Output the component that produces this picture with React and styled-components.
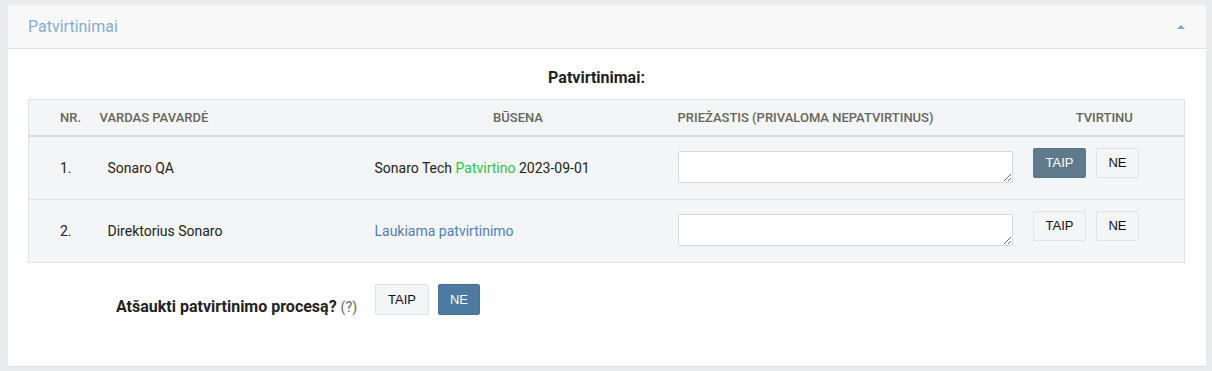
import React from 'react';
import styled, { createGlobalStyle } from 'styled-components';

const Global = createGlobalStyle`
  body {
    margin: 0;
    background: #e9ecef;
    font-family: Roboto, "Liberation Sans", sans-serif;
  }
  #root {
    padding: 5px 6px 7px 8px;
  }
`;

const Card = styled.section`
  background: #fff;
  border-radius: 2px;
  box-shadow: 0 1px 1px rgba(0, 0, 0, 0.06);
`;

const CardHeader = styled.header`
  height: 43px;
  display: flex;
  align-items: center;
  justify-content: space-between;
  padding: 0 20px;
  background: #f8f8f8;
  border-bottom: 1px solid #dde2e6;
  border-radius: 2px 2px 0 0;
`;

const Title = styled.h2`
  margin: 0;
  font-family: Roboto, sans-serif;
  font-weight: 400;
  font-size: 16px;
  color: #86acd2;
`;

const Caret = styled.span`
  width: 0;
  height: 0;
  margin-right: 1px;
  border-left: 4px solid transparent;
  border-right: 4px solid transparent;
  border-bottom: 4px solid #7ea7cf;
`;

const CardBody = styled.div`
  padding: 19px 21px 50px 20px;
`;

const Heading = styled.h3`
  margin: 0 0 11px;
  padding-right: 20px;
  text-align: center;
  font-size: 16px;
  font-weight: 700;
  color: #1f1f1f;
  line-height: 20px;
`;

const Table = styled.table`
  width: 100%;
  border-collapse: collapse;
  table-layout: fixed;
  background: #f4f5f7;
  border: 1px solid #dee2e6;
`;

const Th = styled.th`
  height: 35px;
  padding: 0 8px 0 ${(p) => p.$pl || 8}px;
  font-size: 13px;
  font-weight: 500;
  color: #66675a;
  text-align: ${(p) => p.$align || 'left'};
  border-bottom: 2px solid #d8dfe1;
  white-space: nowrap;
`;

const Tr = styled.tr`
  & + & td {
    border-top: 1px solid #dee2e6;
  }
`;

const Td = styled.td`
  height: 62px;
  padding: 0 8px 0 ${(p) => p.$pl || 8}px;
  font-size: 14px;
  color: #222;
  vertical-align: middle;
`;

const Green = styled.span`
  color: #2bc24c;
`;

const Waiting = styled.span`
  color: #4f82b2;
`;

const Reason = styled.textarea`
  display: block;
  box-sizing: border-box;
  width: 335px;
  height: 32px;
  margin: 0 0 2px;
  border: 1px solid #d4d8dc;
  border-radius: 2px;
  background: #fff;
`;

const Buttons = styled.div`
  display: flex;
  gap: ${(p) => p.$gap || 10}px;
  align-items: center;
  margin-bottom: ${(p) => p.$mb || 0}px;
`;

const Btn = styled.button`
  box-sizing: border-box;
  height: ${(p) => p.$h || 30}px;
  padding: 0 ${(p) => p.$px || 12}px;
  font-family: "Liberation Sans", Arial, sans-serif;
  font-size: 13px;
  color: ${(p) => (p.$variant ? '#fff' : '#111')};
  background: ${(p) =>
    p.$variant === 'dark' ? '#5f7a8a' : p.$variant === 'blue' ? '#4c7aa1' : '#f4f5f7'};
  border: 1px solid
    ${(p) =>
      p.$variant === 'dark' ? '#5a7585' : p.$variant === 'blue' ? '#477297' : '#dfe3e7'};
  border-radius: 2px;
  cursor: pointer;
`;

const Cancel = styled.div`
  display: flex;
  align-items: center;
  margin-top: 19px;
`;

const CancelLabel = styled.div`
  box-sizing: border-box;
  width: 347px;
  padding-left: 88px;
  padding-top: 15px;
  font-size: 16px;
  font-weight: 700;
  color: #222;
`;

const Hint = styled.span`
  font-size: 14px;
  font-weight: 500;
  color: #7a7a7a;
`;

const rows = [
  {
    nr: '1.',
    name: 'Sonaro QA',
    status: (
      <>
        Sonaro Tech <Green>Patvirtino</Green> 2023-09-01
      </>
    ),
    approved: true,
  },
  {
    nr: '2.',
    name: 'Direktorius Sonaro',
    status: <Waiting>Laukiama patvirtinimo</Waiting>,
    approved: false,
  },
];

export default function App() {
  return (
    <>
      <Global />
      <Card>
        <CardHeader>
          <Title>Patvirtinimai</Title>
          <Caret />
        </CardHeader>
        <CardBody>
          <Heading>Patvirtinimai:</Heading>
          <Table>
            <colgroup>
              <col style={{ width: 62 }} />
              <col style={{ width: 276 }} />
              <col style={{ width: 303 }} />
              <col style={{ width: 355 }} />
              <col />
            </colgroup>
            <thead>
              <tr>
                <Th $pl={31}>NR.</Th>
                <Th $pl={9}>VARDAS PAVARDĖ</Th>
                <Th $align="center">BŪSENA</Th>
                <Th>PRIEŽASTIS (PRIVALOMA NEPATVIRTINUS)</Th>
                <Th $align="center">TVIRTINU</Th>
              </tr>
            </thead>
            <tbody>
              {rows.map((r) => (
                <Tr key={r.nr}>
                  <Td $pl={31}>{r.nr}</Td>
                  <Td $pl={17}>{r.name}</Td>
                  <Td>{r.status}</Td>
                  <Td>
                    <Reason />
                  </Td>
                  <Td>
                    <Buttons $mb={11}>
                      <Btn $variant={r.approved ? 'dark' : undefined}>TAIP</Btn>
                      <Btn $px={11}>NE</Btn>
                    </Buttons>
                  </Td>
                </Tr>
              ))}
            </tbody>
          </Table>
          <Cancel>
            <CancelLabel>
              Atšaukti patvirtinimo procesą? <Hint>(?)</Hint>
            </CancelLabel>
            <Buttons $gap={9}>
              <Btn $h={31}>TAIP</Btn>
              <Btn $h={31} $px={11} $variant="blue">NE</Btn>
            </Buttons>
          </Cancel>
        </CardBody>
      </Card>
    </>
  );
}
